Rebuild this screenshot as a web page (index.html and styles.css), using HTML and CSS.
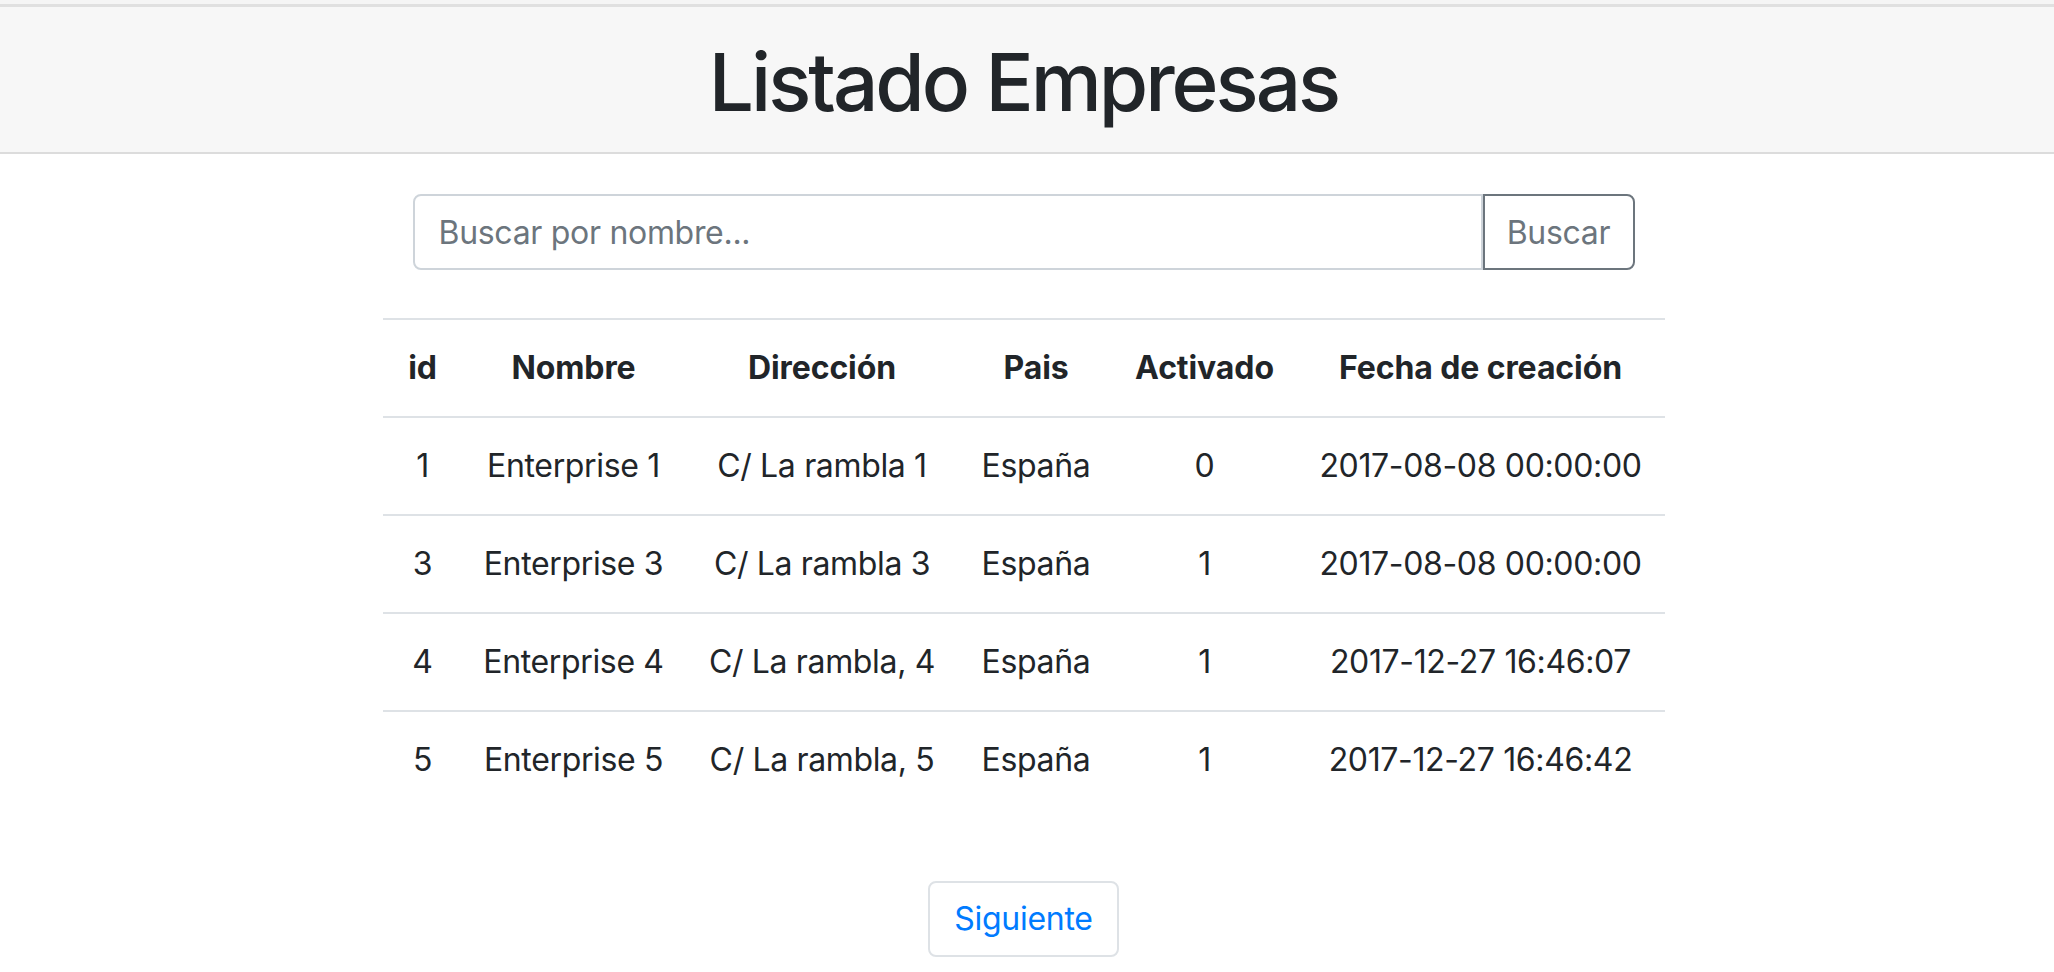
FILE: index.html
```html
<!DOCTYPE html>
<html lang="es">
<head>
<meta charset="utf-8">
<title>Listado Empresas</title>
<link rel="stylesheet" href="styles.css">
</head>
<body>
<div class="top-strip"></div>
<header class="masthead">
  <h1 class="title">Listado Empresas</h1>
</header>
<main class="page">
  <form class="search">
    <input class="search-input" type="text" placeholder="Buscar por nombre...">
    <button class="search-btn" type="button">Buscar</button>
  </form>
  <table class="companies">
    <colgroup>
      <col class="c-id"><col class="c-name"><col class="c-addr"><col class="c-country"><col class="c-active"><col class="c-date">
    </colgroup>
    <thead>
      <tr><th>id</th><th>Nombre</th><th>Dirección</th><th>Pais</th><th>Activado</th><th>Fecha de creación</th></tr>
    </thead>
    <tbody>
      <tr><td>1</td><td>Enterprise 1</td><td>C/ La rambla 1</td><td>España</td><td>0</td><td>2017-08-08 00:00:00</td></tr>
      <tr><td>3</td><td>Enterprise 3</td><td>C/ La rambla 3</td><td>España</td><td>1</td><td>2017-08-08 00:00:00</td></tr>
      <tr><td>4</td><td>Enterprise 4</td><td>C/ La rambla, 4</td><td>España</td><td>1</td><td>2017-12-27 16:46:07</td></tr>
      <tr><td>5</td><td>Enterprise 5</td><td>C/ La rambla, 5</td><td>España</td><td>1</td><td>2017-12-27 16:46:42</td></tr>
    </tbody>
  </table>
  <nav class="pager">
    <a class="page-link" href="#">Siguiente</a>
  </nav>
</main>
</body>
</html>
```

FILE: styles.css
```css
* { box-sizing: border-box; }

html, body {
  margin: 0;
  padding: 0;
  background: #ffffff;
}

body {
  font-family: Inter, "Liberation Sans", sans-serif;
  color: #212529;
  font-size: 32px;
  line-height: 48px;
}

.top-strip {
  height: 4px;
  background: #f5f5f5;
}

.masthead {
  background: #f7f7f7;
  border-top: 3px solid #e0e0e0;
  border-bottom: 2px solid #dcdcdc;
  text-align: center;
  padding: 27px 0 22px;
}

.title {
  margin: 0 7px 0 0;
  font-size: 80px;
  line-height: 96px;
  font-weight: 500;
  letter-spacing: -3px;
}

.page {
  margin-right: 7px;
}

.search {
  display: flex;
  width: 1222px;
  margin: 40px auto 48px;
}

.search-input {
  flex: 1;
  height: 76px;
  margin: 0;
  padding: 0 24px;
  border: 2px solid #ced4da;
  border-radius: 8px 0 0 8px;
  font-family: inherit;
  font-size: 32px;
  color: #495057;
  outline: none;
  letter-spacing: -0.3px;
}

.search-input::placeholder {
  color: #6c757d;
}

.search-btn {
  width: 152px;
  height: 76px;
  margin: 0;
  padding: 0;
  border: 2px solid #6c757d;
  border-radius: 0 8px 8px 0;
  background: #ffffff;
  color: #6c757d;
  font-family: inherit;
  font-size: 32px;
  letter-spacing: -0.3px;
}

.companies {
  table-layout: fixed;
  width: 1282px;
  margin: 0 auto;
  border-collapse: collapse;
}

.c-id { width: 80px; }
.c-name { width: 222px; }
.c-addr { width: 275px; }
.c-country { width: 153px; }
.c-active { width: 184px; }
.c-date { width: 368px; }

.companies th,
.companies td {
  padding: 24px 0;
  line-height: 48px;
  text-align: center;
  border-top: 2px solid #dee2e6;
  white-space: nowrap;
}

.companies td {
  letter-spacing: -0.35px;
}

.companies th {
  font-weight: 700;
  letter-spacing: -0.1px;
}

.pager {
  display: flex;
  justify-content: center;
  margin-top: 73px;
}

.page-link {
  display: block;
  padding: 16px 24px;
  line-height: 40px;
  border: 2px solid #dee2e6;
  border-radius: 8px;
  color: #007bff;
  text-decoration: none;
  font-size: 32px;
  letter-spacing: -0.3px;
}
```
